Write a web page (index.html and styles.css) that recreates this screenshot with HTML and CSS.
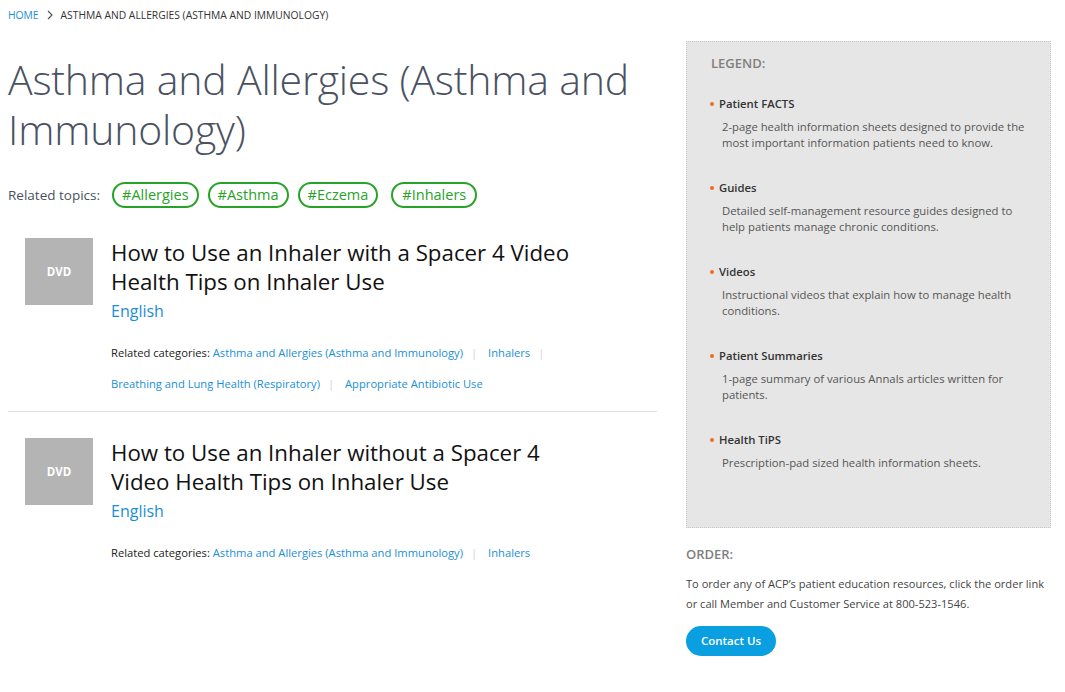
FILE: index.html
```html
<!DOCTYPE html>
<html lang="en">
<head>
<meta charset="utf-8">
<title>Asthma and Allergies (Asthma and Immunology)</title>
<link rel="stylesheet" href="styles.css">
</head>
<body>
<div class="page">
  <nav class="crumbs">
    <a href="#" class="crumb-home">HOME</a>
    <svg class="crumb-sep" width="8" height="10" viewBox="0 0 8 10"><path d="M2 1l4 4-4 4" fill="none" stroke="#555" stroke-width="1.2"/></svg>
    <span class="crumb-current">ASTHMA AND ALLERGIES (ASTHMA AND IMMUNOLOGY)</span>
  </nav>
  <div class="layout">
    <main class="main">
      <h1 class="page-title">Asthma and Allergies (Asthma and Immunology)</h1>
      <div class="topics">
        <span class="topics-label">Related topics:</span>
        <a href="#" class="pill">#Allergies</a>
        <a href="#" class="pill">#Asthma</a>
        <a href="#" class="pill">#Eczema</a>
        <a href="#" class="pill">#Inhalers</a>
      </div>

      <article class="item">
        <div class="thumb">DVD</div>
        <div class="item-body">
          <h2 class="item-title">How to Use an Inhaler with a Spacer 4 Video Health Tips on Inhaler Use</h2>
          <a href="#" class="lang">English</a>
          <div class="cats">
            <span class="cats-label">Related categories:</span>
            <span class="cat"><a href="#">Asthma and Allergies (Asthma and Immunology)</a><span class="sep">|</span></span>
            <span class="cat"><a href="#">Inhalers</a><span class="sep">|</span></span>
            <span class="cat"><a href="#">Breathing and Lung Health (Respiratory)</a><span class="sep">|</span></span>
            <span class="cat"><a href="#">Appropriate Antibiotic Use</a></span>
          </div>
        </div>
      </article>

      <article class="item last">
        <div class="thumb">DVD</div>
        <div class="item-body">
          <h2 class="item-title">How to Use an Inhaler without a Spacer 4 Video Health Tips on Inhaler Use</h2>
          <a href="#" class="lang">English</a>
          <div class="cats">
            <span class="cats-label">Related categories:</span>
            <span class="cat"><a href="#">Asthma and Allergies (Asthma and Immunology)</a><span class="sep">|</span></span>
            <span class="cat"><a href="#">Inhalers</a></span>
          </div>
        </div>
      </article>
    </main>

    <aside class="side">
      <section class="legend">
        <h3 class="legend-title">LEGEND:</h3>
        <ul class="legend-list">
          <li><span class="legend-name">Patient FACTS</span><p>2-page health information sheets designed to provide the most important information patients need to know.</p></li>
          <li><span class="legend-name">Guides</span><p>Detailed self-management resource guides designed to help patients manage chronic conditions.</p></li>
          <li><span class="legend-name">Videos</span><p>Instructional videos that explain how to manage health conditions.</p></li>
          <li><span class="legend-name">Patient Summaries</span><p>1-page summary of various Annals articles written for patients.</p></li>
          <li><span class="legend-name">Health TiPS</span><p>Prescription-pad sized health information sheets.</p></li>
        </ul>
      </section>
      <section class="order">
        <h3 class="order-title">ORDER:</h3>
        <p class="order-text">To order any of ACP’s patient education resources, click the order link or call Member and Customer Service at 800-523-1546.</p>
        <a href="#" class="btn">Contact Us</a>
      </section>
    </aside>
  </div>
</div>
</body>
</html>
```

FILE: styles.css
```css
* { box-sizing: border-box; }
html, body { margin: 0; padding: 0; background: #fff; }
body {
  font-family: "Open Sans", "Noto Sans", "Liberation Sans", sans-serif;
  color: #333;
  overflow: hidden;
}
a { text-decoration: none; color: #1a8fd6; }

.page { padding: 7px 0 0 8px; width: 1065px; }

.crumbs {
  display: flex;
  align-items: center;
  gap: 6px;
  font-size: 10.3px;
  line-height: 16px;
  height: 16px;
  color: #333;
}
.crumb-home { color: #1a8fd6; }
.crumb-sep { margin: 0 1px; }

.layout {
  display: grid;
  grid-template-columns: 649px 365px;
  column-gap: 29px;
  margin-top: 18px;
}

.page-title {
  margin: 13px 0 0;
  font-weight: 300;
  font-size: 41px;
  line-height: 50px;
  color: #4a5262;
  letter-spacing: -0.2px;
}

.topics {
  display: flex;
  align-items: center;
  gap: 9px;
  margin-top: 28px;
}
.topics-label { font-size: 13.5px; color: #4a5262; margin-right: 3px; }
.pill {
  display: inline-block;
  border: 2px solid #27a327;
  border-radius: 13px;
  color: #27a327;
  font-size: 14.5px;
  line-height: 22px;
  padding: 0 8px;
}
.pill:last-child { margin-left: 4px; padding: 0 9px; }

.item {
  display: flex;
  gap: 18px;
  padding: 30px 0 12px 17px;
  border-bottom: 1px solid #e0e0e0;
}
.item.last { border-bottom: none; padding-top: 26px; }
.thumb {
  flex: 0 0 68px;
  height: 67px;
  background: #b4b4b4;
  color: #fff;
  font-weight: 700;
  font-size: 11.5px;
  display: flex;
  align-items: center;
  justify-content: center;
}
.item-body { flex: 1; }
.item-title {
  margin: 0;
  font-weight: 400;
  font-size: 22.3px;
  line-height: 29px;
  color: #111;
  width: 480px;
}
.lang { display: block; font-size: 16px; line-height: 24px; margin-top: 3px; }
.cats {
  margin-top: 14px;
  font-size: 11.2px;
  line-height: 31px;
  color: #222;
  max-width: 450px;
}
.cat { white-space: nowrap; }
.cats-label { color: #222; }
.cats .sep { color: #d4d4d4; margin: 0 8px; }

.side { display: flex; flex-direction: column; }
.legend {
  background: #e6e6e6;
  border: 1px dotted #c8c8c8;
  height: 487px;
  padding: 12px 20px 0 24px;
}
.legend-title {
  margin: 0;
  font-size: 13px;
  line-height: 18px;
  font-weight: 600;
  color: #808080;
}
.legend-list { list-style: none; margin: 24px 0 0; padding: 0; }
.legend-list li { position: relative; padding-left: 8px; height: 84px; }
.legend-list li::before {
  content: "";
  position: absolute;
  left: -1px;
  top: 6px;
  width: 4px;
  height: 4px;
  border-radius: 50%;
  background: #f26a21;
}
.legend-name {
  display: block;
  font-size: 11.3px;
  line-height: 16px;
  font-weight: 600;
  color: #333;
}
.legend-list p {
  margin: 7px 0 0 3px;
  font-size: 11.3px;
  line-height: 16px;
  color: #555;
}

.order { padding-top: 17px; }
.order-title {
  margin: 0;
  font-size: 13px;
  line-height: 18px;
  font-weight: 600;
  color: #808080;
}
.order-text {
  margin: 11px 0 0;
  font-size: 11.1px;
  line-height: 20px;
  color: #444;
}
.btn {
  display: inline-block;
  margin-top: 12px;
  background: #0a9fe0;
  color: #fff;
  font-weight: 600;
  font-size: 11.5px;
  line-height: 30px;
  height: 30px;
  width: 90px;
  text-align: center;
  border-radius: 15px;
}
```
